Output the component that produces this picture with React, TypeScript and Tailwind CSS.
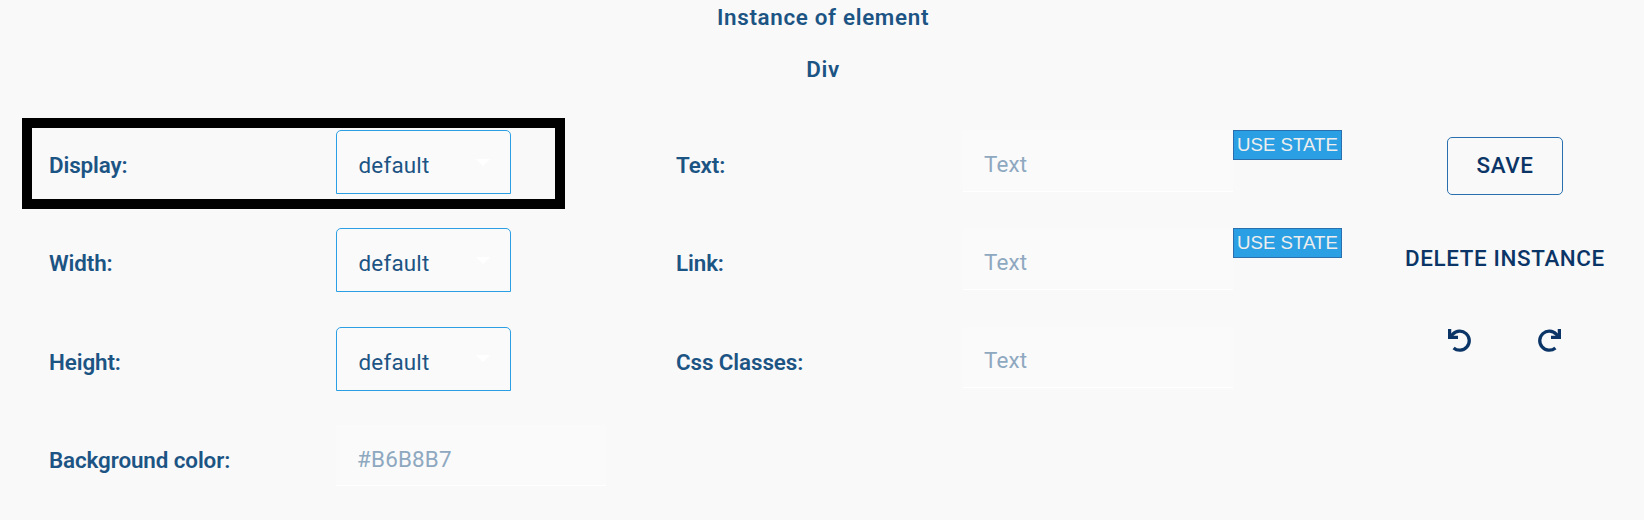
import React from "react";

function Label({ children }: { children: React.ReactNode }) {
  return <span className="w-[287px] shrink-0 pt-[22px] font-semibold leading-[26px] tracking-[-0.1px] whitespace-nowrap">{children}</span>;
}

function Select() {
  return (
    <button className="flex h-16 w-[175px] items-center justify-between rounded-t-[5px] border border-[#2b9fe3] bg-[#fafafa] pt-[6px] pr-[20px] pl-[21.5px] text-left leading-[26px] tracking-[0.2px]">
      <span>default</span>
      <svg className="-mt-[6px] h-[7px] w-[14px]" viewBox="0 0 14 7"><path d="M0 0h14L7 7z" fill="#fff" /></svg>
    </button>
  );
}

function Field({ placeholder }: { placeholder: string }) {
  return (
    <input
      placeholder={placeholder}
      className="h-[61.5px] w-[270px] border-b border-white bg-[#fafafa] pt-[7px] pl-[21px] tracking-[0.2px] placeholder:text-[#8ea8c0] outline-none"
    />
  );
}

function UseState() {
  return (
    <button className="h-[30px] w-[109px] border border-[#2a6fae] bg-[#2b9fe3] font-['Liberation_Sans',sans-serif] text-[18.67px] leading-[28px] whitespace-nowrap text-[#eeeeee]">
      USE STATE
    </button>
  );
}

function Turn({ flip }: { flip?: boolean }) {
  return (
    <svg className={flip ? "h-6 w-6 -scale-x-100" : "h-6 w-6"} viewBox="0 0 24 24" fill="none" stroke="#0b3566" strokeWidth="3.3">
      <path d="M1.6 0v8.4H10" />
      <path d="M2 8.4 L4.8 5.2 A9.5 9.5 0 1 1 5.6 18.9" strokeLinejoin="round" />
    </svg>
  );
}

const row = "flex h-[98.3px] items-start";

export default function App() {
  return (
    <main className="relative h-[520px] w-[1644px] overflow-hidden bg-[#f9f9f9] font-[Roboto,sans-serif] text-[22.4px] text-[#1c5484]">
      <header className="flex h-[130px] flex-col items-center gap-[26px] pt-[4px] pl-[2px] font-semibold leading-[26px] tracking-[0.67px]">
        <h1>Instance of element</h1>
        <h2>Div</h2>
      </header>
      <div className="flex pl-[49px]">
        <section className="w-[627px] shrink-0">
          <div className={row}><Label>Display:</Label><Select /></div>
          <div className={row}><Label>Width:</Label><Select /></div>
          <div className={row}><Label>Height:</Label><Select /></div>
          <div className={row}><Label>Background color:</Label><Field placeholder="#B6B8B7" /></div>
        </section>
        <section className="w-[666px] shrink-0">
          <div className={row}><Label>Text:</Label><Field placeholder="Text" /><UseState /></div>
          <div className={row}><Label>Link:</Label><Field placeholder="Text" /><UseState /></div>
          <div className={row}><Label>Css Classes:</Label><Field placeholder="Text" /></div>
        </section>
        <aside className="ml-[56px] flex w-[214px] flex-col items-center pt-[7px] font-medium text-[#0b3566]">
          <button className="h-[58px] w-[116px] rounded-[5px] border border-[#2a6fae] pb-[2px] leading-[26px] tracking-[0.6px]">SAVE</button>
          <button className="mt-[50px] leading-[26px] tracking-[0.62px] whitespace-nowrap">DELETE INSTANCE</button>
          <div className="mt-[58px] mr-[1px] flex gap-[65px]">
            <button aria-label="Undo"><Turn /></button>
            <button aria-label="Redo"><Turn flip /></button>
          </div>
        </aside>
      </div>
      <div className="pointer-events-none absolute top-[118px] left-[22px] h-[91px] w-[543px] border-[10px] border-black" />
    </main>
  );
}
